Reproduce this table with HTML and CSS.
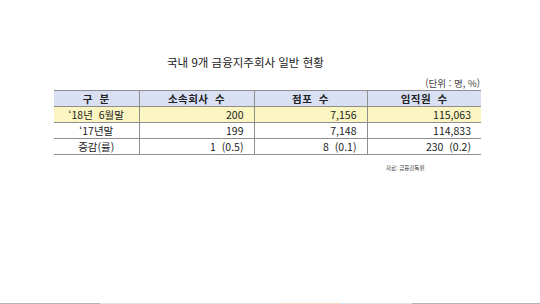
FILE: index.html
```html
<!DOCTYPE html>
<html lang="ko">
<head>
<meta charset="utf-8">
<link rel="stylesheet" href="styles.css">
</head>
<body>
<div class="page">
  <div class="sheet">
    <div class="title">국내 9개 금융지주회사 일반 현황</div>
    <div class="unit">(단위 : 명, %)</div>
    <table class="grid">
      <colgroup>
        <col class="c0"><col class="c1"><col class="c2"><col class="c3">
      </colgroup>
      <thead>
        <tr class="head">
          <th>구 분</th><th>소속회사 수</th><th>점포 수</th><th>임직원 수</th>
        </tr>
      </thead>
      <tbody>
        <tr class="hl">
          <td class="lab">‘18년&nbsp;&nbsp;6월말</td><td>200</td><td>7,156</td><td>115,063</td>
        </tr>
        <tr>
          <td class="lab">‘17년말</td><td>199</td><td>7,148</td><td>114,833</td>
        </tr>
        <tr>
          <td class="lab">증감(률)</td><td>1&nbsp;&nbsp;(0.5)</td><td>8&nbsp;&nbsp;(0.1)</td><td>230&nbsp;&nbsp;(0.2)</td>
        </tr>
      </tbody>
    </table>
    <div class="src">자료: 금융감독원</div>
  </div>
  <div class="foot">
    <span class="f1"></span><span class="f2"></span><span class="f3"></span><span class="f4"></span><span class="f5"></span>
  </div>
</div>
</body>
</html>
```
FILE: styles.css
```css
html, body {
  margin: 0;
  padding: 0;
  background: #ffffff;
}
body {
  font-family: "Noto Sans CJK KR", "Noto Sans", sans-serif;
  color: #222;
}
.page {
  width: 540px;
  height: 304px;
  display: flex;
  flex-direction: column;
  overflow: hidden;
}
.sheet {
  flex: 1;
  display: flex;
  flex-direction: column;
  padding: 54px 0 0 54px;
  width: 427px;
}
.title {
  font-size: 11.5px;
  line-height: 16px;
  margin-left: 113px;
  color: #222;
}
.unit {
  font-size: 9.5px;
  line-height: 12px;
  text-align: right;
  color: #444;
  margin-top: 7px;
  margin-right: 1px;
}
.grid {
  border-collapse: collapse;
  width: 427px;
  table-layout: fixed;
  font-size: 10.5px;
  margin-top: 1px;
}
.c0 { width: 85px; }
.c1 { width: 115px; }
.c2 { width: 113px; }
.c3 { width: 114px; }
.grid th, .grid td {
  height: 15px;
  padding: 0 10px 0 0;
  line-height: 15px;
  border-top: 1px solid #8e8e8e;
  border-bottom: 1px solid #8e8e8e;
  border-left: 1px solid #8e8e8e;
  text-align: right;
  white-space: nowrap;
}
.grid th:first-child, .grid td:first-child {
  border-left: none;
}
.grid th {
  background: #d9e0f4;
  font-weight: 700;
  text-align: center;
  padding: 0;
  letter-spacing: 0.5px;
  word-spacing: 3px;
}
.grid .hl td {
  background: #fbf6c1;
}
.grid td.lab {
  text-align: center;
  padding: 0;
}
.src {
  font-size: 5.5px;
  line-height: 8px;
  margin-top: 9px;
  margin-left: 332px;
  color: #333;
}
.foot {
  height: 1px;
  display: flex;
}
.foot span { display: block; height: 1px; }
.f1 { width: 100px; background: #b5b5b5; }
.f2 { width: 180px; background: #dde3ea; }
.f3 { width: 60px; background: #f5d9c0; }
.f4 { width: 72px; background: #dde3ea; }
.f5 { flex: 1; background: #b5b5b5; }
```
